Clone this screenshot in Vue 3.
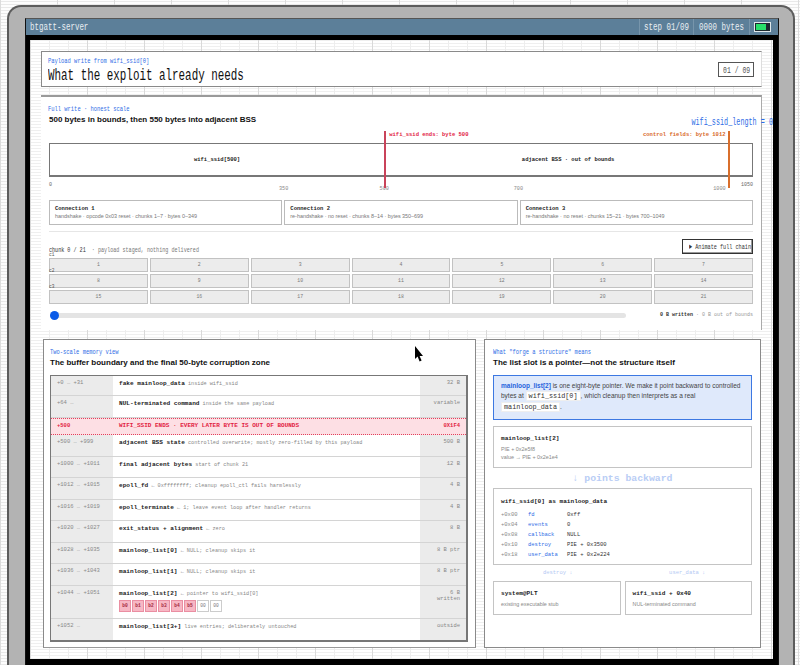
<script setup>
const connections = [
  { name: 'Connection 1', text: 'handshake · opcode 0x03 reset · chunks 1–7 · bytes 0–349' },
  { name: 'Connection 2', text: 're-handshake · no reset · chunks 8–14 · bytes 350–699' },
  { name: 'Connection 3', text: 're-handshake · no reset · chunks 15–21 · bytes 700–1049' },
]
const chunkRows = [
  { label: 'c1', cells: [1, 2, 3, 4, 5, 6, 7] },
  { label: 'c2', cells: [8, 9, 10, 11, 12, 13, 14] },
  { label: 'c3', cells: [15, 16, 17, 18, 19, 20, 21] },
]
const axis = [
  { v: 0, cls: 'start' }, { v: 350, cls: 'mid' }, { v: 500, cls: 'mid' },
  { v: 700, cls: 'mid' }, { v: 1000, cls: 'mid' }, { v: 1050, cls: 'end' },
]
const pct = (v) => (v / 1050) * 100 + '%'
const rows = [
  { off: '+0 … +31', name: 'fake mainloop_data', sub: 'inside wifi_ssid', size: '32 B', cls: 'first' },
  { off: '+64 …', name: 'NUL-terminated command', sub: 'inside the same payload', size: 'variable' },
  { off: '+500', red: 'WIFI_SSID ENDS · EVERY LATER BYTE IS OUT OF BOUNDS', size: '0X1F4', cls: 'red' },
  { off: '+500 … +999', name: 'adjacent BSS state', sub: 'controlled overwrite; mostly zero-filled by this payload', size: '500 B' },
  { off: '+1000 … +1011', name: 'final adjacent bytes', sub: 'start of chunk 21', size: '12 B' },
  { off: '+1012 … +1015', name: 'epoll_fd', sub: '← 0xffffffff; cleanup epoll_ctl fails harmlessly', size: '4 B' },
  { off: '+1016 … +1019', name: 'epoll_terminate', sub: '← 1; leave event loop after handler returns', size: '4 B' },
  { off: '+1020 … +1027', name: 'exit_status + alignment', sub: '← zero', size: '8 B' },
  { off: '+1028 … +1035', name: 'mainloop_list[0]', sub: '← NULL; cleanup skips it', size: '8 B ptr' },
  { off: '+1036 … +1043', name: 'mainloop_list[1]', sub: '← NULL; cleanup skips it', size: '8 B ptr' },
  { off: '+1044 … +1051', name: 'mainloop_list[2]', sub: '← pointer to wifi_ssid[0]', size: '6 B written', cls: 'tall', bytes: true },
  { off: '+1052 …', name: 'mainloop_list[3+]', sub: 'live entries; deliberately untouched', size: 'outside' },
]
const bytes = ['b0', 'b1', 'b2', 'b3', 'b4', 'b5', '00', '00']
const fields = [
  ['+0x00', 'fd', '0xff'],
  ['+0x04', 'events', '0'],
  ['+0x08', 'callback', 'NULL'],
  ['+0x10', 'destroy', 'PIE + 0x3500'],
  ['+0x18', 'user_data', 'PIE + 0x2e224'],
]
</script>

<template>
  <div class="bezel">
    <div class="window">
      <header class="titlebar">
        <span class="sx tb-name">btgatt-server</span>
        <div class="tb-right">
          <div class="tb-cell step"><span class="sx">step 01/09</span></div>
          <div class="tb-cell bytes"><span class="sx">0000 bytes</span></div>
          <div class="tb-cell batt">
            <div class="battery"><i></i></div>
          </div>
        </div>
      </header>

      <main class="content">
        <section class="panel head">
          <div>
            <div class="eyebrow"><span class="sx">Payload write from wifi_ssid[0]</span></div>
            <h1 class="big"><span class="sx">What the exploit already needs</span></h1>
          </div>
          <div class="counter"><span class="sx">01 / 09</span></div>
        </section>

        <section class="panel full">
          <div class="full-top">
            <div>
              <div class="eyebrow"><span class="sx">Full write · honest scale</span></div>
              <h2 class="title">500 bytes in bounds, then 550 bytes into adjacent BSS</h2>
            </div>
            <div class="len"><span class="sx sxr">wifi_ssid_length = 0</span></div>
          </div>

          <div class="scale">
            <div class="bar">
              <div class="seg left">wifi_ssid[500]</div>
              <div class="seg right">adjacent BSS · out of bounds</div>
            </div>
            <div class="axis">
              <span v-for="a in axis" :key="a.v" :class="['tick', a.cls]" :style="{ left: pct(a.v) }">{{ a.v }}</span>
            </div>
            <div class="marker m-red" :style="{ left: pct(500) }"><span>wifi_ssid ends: byte 500</span></div>
            <div class="marker m-orange" :style="{ left: pct(1012) }"><span>control fields: byte 1012</span></div>
          </div>

          <div class="conns">
            <div v-for="c in connections" :key="c.name" class="conn">
              <b>{{ c.name }}</b>
              <p>{{ c.text }}</p>
            </div>
          </div>

          <div class="chunk-head">
            <span class="sx chunk-text"><em>chunk 0 / 21</em> &nbsp;· payload staged, nothing delivered</span>
            <button class="anim" type="button"><span class="sx">► Animate full chain</span></button>
          </div>

          <div class="chunks">
            <div v-for="r in chunkRows" :key="r.label" class="chunk-row">
              <span class="c-label">{{ r.label }}</span>
              <div v-for="n in r.cells" :key="n" class="chunk">{{ n }}</div>
            </div>
          </div>

          <div class="slide">
            <div class="track"><i></i></div>
            <div class="written"><b>0 B written</b> · 0 B out of bounds</div>
          </div>
        </section>

        <div class="bottom">
          <section class="panel mem">
            <div class="eyebrow"><span class="sx">Two-scale memory view</span></div>
            <h2 class="title">The buffer boundary and the final 50-byte corruption zone</h2>
            <div class="table">
              <div v-for="r in rows" :key="r.off" :class="['row', r.cls]">
                <div class="off">{{ r.off }}</div>
                <div class="mid">
                  <template v-if="r.red">{{ r.red }}</template>
                  <template v-else>
                    <b>{{ r.name }}</b> <span>{{ r.sub }}</span>
                    <div v-if="r.bytes" class="bytes-row">
                      <i v-for="(b, i) in bytes" :key="i" :class="{ hot: i < 6 }">{{ b }}</i>
                    </div>
                  </template>
                </div>
                <div class="size">{{ r.size }}</div>
              </div>
            </div>
          </section>

          <section class="panel forge">
            <div class="eyebrow"><span class="sx">What "forge a structure" means</span></div>
            <h2 class="title">The list slot is a pointer—not the structure itself</h2>
            <div class="note">
              <b>mainloop_list[2]</b> is one eight-byte pointer. We make it point backward to controlled bytes at
              <code>wifi_ssid[0]</code>, which cleanup then interprets as a real <code>mainloop_data</code>.
            </div>
            <div class="box slot">
              <strong>mainloop_list[2]</strong>
              <p>PIE + 0x2e5f8<br />value → PIE + 0x2e1e4</p>
            </div>
            <div class="back">↓ points backward</div>
            <div class="box struct">
              <strong>wifi_ssid[0] as mainloop_data</strong>
              <div class="fields">
                <template v-for="f in fields" :key="f[0]">
                  <span class="f-off">{{ f[0] }}</span>
                  <span class="f-name">{{ f[1] }}</span>
                  <span class="f-val">{{ f[2] }}</span>
                </template>
              </div>
            </div>
            <div class="arrows">
              <span>destroy ↓</span>
              <span>user_data ↓</span>
            </div>
            <div class="targets">
              <div class="box target"><strong>system@PLT</strong><p>existing executable stub</p></div>
              <div class="box target"><strong>wifi_ssid + 0x40</strong><p>NUL-terminated command</p></div>
            </div>
          </section>
        </div>
      </main>
    </div>
    <svg class="cursor" width="10" height="18" viewBox="0 0 10 18">
      <path d="M1 0 L1 13 L3.6 10.6 L5.6 15.5 L7.6 14.6 L5.6 10 L9 10 Z" fill="#000" />
    </svg>
  </div>
</template>

<style>
html, body { margin: 0; height: 665px; overflow: hidden; }
body {
  background:
    repeating-linear-gradient(90deg, #dcdcdc 0 1px, transparent 1px 57px),
    repeating-linear-gradient(0deg, #e9e9e9 0 1px, #fdfdfd 1px 3px);
}
</style>

<style scoped>
* { box-sizing: border-box; }
.bezel {
  position: relative;
  margin: 5px 5px 0 7px;
  height: 660px;
  padding: 11px 14px 0 16px;
  background: #b3b3b3;
  border: 2px solid #5c5c5c;
  border-bottom: 0;
  border-radius: 14px 14px 0 0;
  font-family: "Liberation Sans", Arial, sans-serif;
}
.window {
  height: 648px;
  background: #000;
  border: 1px solid #111;
  border-top-color: #555;
  display: flex;
  flex-direction: column;
}
.sx {
  display: inline-block;
  white-space: nowrap;
  transform: scaleX(0.68);
  transform-origin: left center;
  font-family: "Liberation Mono", "DejaVu Sans Mono", monospace;
}
.sxr { transform-origin: right center; }
.titlebar {
  height: 16px;
  flex: none;
  background: #5c7f99;
  color: #e9eef2;
  display: flex;
  align-items: center;
  justify-content: space-between;
  padding-left: 4px;
  font-size: 11px;
}
.tb-name { width: 100px; }
.tb-right { display: flex; height: 100%; }
.tb-cell {
  height: 100%;
  display: flex;
  align-items: center;
  border-left: 1px solid #7795ab;
  overflow: hidden;
}
.step { width: 54px; padding-left: 4px; }
.bytes { width: 56px; padding-left: 5px; }
.batt { width: 29px; padding-left: 5px; }
.battery {
  position: relative;
  width: 15px;
  height: 8px;
  border: 1px solid #1c2a30;
  background: #1c2a30;
  outline: 1px solid #dfe8ec;
}
.battery i { display: block; width: 10px; height: 100%; background: #27e06a; }
.content {
  flex: 1;
  margin: 5px 5px 6px 4px;
  padding: 11px 11px 11px 11px;
  display: flex;
  flex-direction: column;
  gap: 8px;
  min-height: 0;
  background:
    repeating-linear-gradient(90deg, #d9d9d9 0 1px, transparent 1px 57px),
    repeating-linear-gradient(90deg, #ededed 0 1px, transparent 1px 19px),
    repeating-linear-gradient(0deg, #efefef 0 1px, #fff 1px 3px);
}
.panel { background: #fff; border: 1px solid #8a8a8a; }
.head {
  height: 36px;
  flex: none;
  padding: 4px 7px 0 6px;
  display: flex;
  justify-content: space-between;
  border-right-color: #ddd;
}
.eyebrow { color: #2f6de6; font-size: 8px; line-height: 9px; }
.big { margin: 1px 0 0; font-size: 16px; line-height: 17px; font-weight: 400; color: #111; }
.counter {
  align-self: center;
  margin-top: -4px;
  width: 36px;
  height: 15px;
  border: 1px solid #555;
  color: #555;
  font-size: 9.5px;
  line-height: 13px;
  padding-left: 4px;
}
.full {
  height: 235px;
  flex: none;
  padding: 7px 8px 0 7px;
  border-width: 2px 1px 0 0;
  border-color: #9a9a9a #aaa transparent transparent;
}
.full-top { display: flex; justify-content: space-between; height: 29px; }
.title { margin: 2px 0 0; font-size: 8px; line-height: 10px; font-weight: 700; color: #111; white-space: nowrap; }
.full .title { margin-left: 1px; }
.len { margin-top: 12px; color: #2f6de6; font-size: 10px; line-height: 12px; width: 100px; text-align: right; }
.scale { position: relative; margin-left: 1px; margin-top: 10px; height: 46px; }
.bar { display: flex; height: 34px; border: 1px solid #777; border-bottom-width: 2px; }
.seg {
  display: flex;
  align-items: center;
  justify-content: center;
  font: 700 5.5px "Liberation Mono", monospace;
  color: #222;
}
.left { width: 47.6%; }
.right { flex: 1; }
.axis { position: relative; height: 12px; }
.tick { position: absolute; top: 5px; font: 5px "Liberation Mono", monospace; color: #666; }
.tick.start { margin-left: 0; }
.tick.mid { transform: translateX(-50%); }
.tick.end { transform: translateX(-100%); }
.marker { position: absolute; top: -12px; height: 57px; width: 2px; }
.marker span {
  position: absolute;
  top: 0;
  white-space: nowrap;
  font: 700 5.5px/7px "Liberation Mono", monospace;
}
.m-red { background: #c9435a; }
.m-red span { left: 5px; color: #e2213f; }
.m-orange { background: #d96f2c; }
.m-orange span { right: 4px; color: #d8692a; }
.conns {
  margin: 11px 0 0 1px;
  padding-bottom: 6px;
  display: grid;
  grid-template-columns: repeat(3, 1fr);
  gap: 2px;
  border-bottom: 1px solid #e6e6e6;
}
.conn { height: 25px; border: 1px solid #bbb; padding: 4px 5px; }
.conn b { display: block; font: 700 5.5px/7px "Liberation Mono", monospace; color: #222; }
.conn p { margin: 1px 0 0; font-size: 5.4px; line-height: 7px; color: #777; white-space: nowrap; }
.chunk-head {
  margin: 6px 0 0 1px;
  height: 20px;
  display: flex;
  align-items: center;
  justify-content: space-between;
}
.chunk-text { font-size: 7.5px; color: #777; margin-top: 3px; }
.chunk-text em { font-style: normal; color: #333; }
.anim {
  width: 71px;
  height: 15px;
  padding: 0 0 0 6px;
  text-align: left;
  background: #fff;
  border: 1px solid #333;
  box-shadow: inset -1px -1px 0 #999;
  color: #333;
  font-size: 7.6px;
  line-height: 12px;
  margin-bottom: 3px;
}
.chunks { margin-left: 1px; display: grid; gap: 2px; }
.chunk-row { position: relative; display: grid; grid-template-columns: repeat(7, 1fr); gap: 2px; }
.c-label { position: absolute; left: 0; top: -6px; font: 4.5px/5px "Liberation Mono", monospace; color: #555; }
.chunk {
  height: 14px;
  background: #ececec;
  border: 1px solid #c2c2c2;
  text-align: center;
  font: 4.8px/12px "Liberation Mono", monospace;
  color: #777;
}
.slide { margin-top: 8px; display: flex; align-items: center; justify-content: space-between; margin-left: 1px; }
.track { position: relative; width: 576px; height: 5px; margin-left: 1px; background: #e4e4e4; border-radius: 3px; }
.track i {
  position: absolute;
  left: 0;
  top: -2px;
  width: 9px;
  height: 9px;
  border-radius: 50%;
  background: #0a5be8;
}
.written { font: 5px "Liberation Mono", monospace; color: #999; }
.written b { color: #333; }
.bottom { flex: 1; display: flex; gap: 8px; min-height: 0; margin: 1px 1px 0 2px; }
.mem { width: 433px; padding: 7px 7px 0 6px; border-color: #8a8a8a #8a8a8a #999 #8a8a8a; }
.forge { flex: 1; padding: 7px 8px 0 8px; }
.table { margin-top: 7px; border: 1px solid #777; border-width: 1px 2px 2px 1px; }
.row {
  display: grid;
  grid-template-columns: 62px 1fr 46px;
  height: 21.5px;
  border-bottom: 1px solid #d4d4d4;
  font-family: "Liberation Mono", monospace;
}
.row.first { height: 20px; }
.row:last-child { border-bottom: 0; }
.row.tall { height: 33px; }
.off, .size { background: #ebebeb; padding: 4px 6px 0; font-size: 5.5px; line-height: 6px; color: #888; }
.size { text-align: right; }
.mid { padding: 4px 6px 0; line-height: 7px; font-size: 5.2px; color: #888; }
.mid b { font-size: 6.1px; color: #222; }
.row.red {
  height: 17.5px;
  background: #fddfe4;
  border-top: 1px dotted #e2405c;
  border-bottom: 1px dotted #e2405c;
}
.red .off, .red .size { background: transparent; color: #e2213f; font-weight: 700; padding-top: 4px; }
.red .mid { color: #e2213f; font-size: 6px; font-weight: 700; line-height: 7px; padding-top: 3px; }
.bytes-row { display: flex; gap: 1px; margin-top: 2px; }
.bytes-row i {
  width: 12px;
  height: 12px;
  border: 1px solid #ccc;
  background: #fff;
  font: 4.6px/10px "Liberation Mono", monospace;
  text-align: center;
  color: #777;
}
.bytes-row i.hot { background: #f7b7c4; border-color: #ea8ea2; color: #a5283f; font-weight: 700; }
.note {
  margin-top: 7px;
  height: 45px;
  background: #dfe9fb;
  border: 1px solid #3d78e2;
  padding: 5px 7px 0;
  font-size: 6.5px;
  line-height: 10.4px;
  color: #444;
}
.note b { color: #1f63dc; }
.note code {
  font: 6.8px "Liberation Mono", monospace;
  color: #333;
  background: #fff;
  border: 1px solid #eee;
  padding: 0 2px;
}
.box { border: 1px solid #c4c4c4; padding: 8px 7px 0; }
.box strong { display: block; font: 700 6.1px/8px "Liberation Mono", monospace; color: #222; }
.box p { margin: 0; font-size: 5.4px; line-height: 7.8px; color: #888; }
.slot { margin-top: 6px; height: 42px; }
.slot p { margin-top: 3px; }
.back { height: 20px; text-align: center; font: 700 9.8px/21px "Liberation Mono", monospace; color: #b9cdf5; }
.struct { height: 77px; padding-top: 9px; }
.fields {
  margin-top: 4px;
  display: grid;
  grid-template-columns: 27px 39px 1fr;
  grid-auto-rows: 10px;
  font: 5.5px/10px "Liberation Mono", monospace;
  color: #333;
}
.f-off { color: #888; }
.f-name { color: #2f6de6; }
.arrows { display: grid; grid-template-columns: 1fr 1fr; height: 16px; text-align: center; font: 5.5px/16px "Liberation Mono", monospace; color: #b4c9f3; }
.targets { display: grid; grid-template-columns: 1fr 1fr; gap: 4px; }
.target { height: 34px; }
.target strong { margin-bottom: 3px; }
.cursor { position: absolute; left: 405px; top: 339px; }
</style>
